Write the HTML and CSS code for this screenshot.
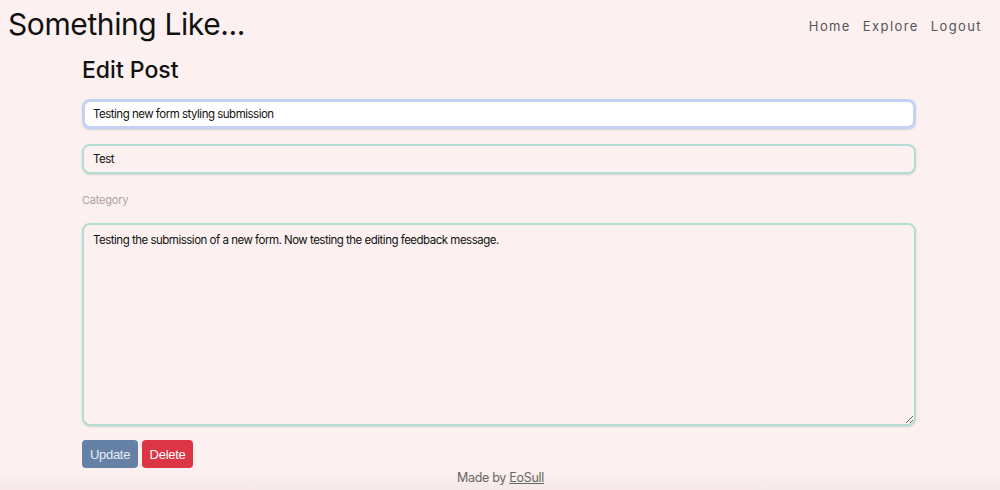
FILE: index.html
```html
<!DOCTYPE html>
<html>
<head>
<meta charset="utf-8">
<link rel="stylesheet" href="styles.css">
</head>
<body>
<header class="topbar">
  <h1 class="brand">Something Like...</h1>
  <nav class="nav">
    <a href="#">Home</a>
    <a href="#">Explore</a>
    <a href="#">Logout</a>
  </nav>
</header>
<main class="content">
  <h2 class="title">Edit Post</h2>
  <form class="form">
    <input class="field field-focus" type="text" value="Testing new form styling submission">
    <input class="field" type="text" value="Test">
    <div class="label">Category</div>
    <textarea class="field area">Testing the submission of a new form. Now testing the editing feedback message.</textarea>
    <div class="buttons">
      <button class="btn btn-update" type="button">Update</button>
      <button class="btn btn-delete" type="button">Delete</button>
    </div>
  </form>
</main>
<footer class="footer">Made by <a href="#">EoSull</a></footer>
</body>
</html>
```
FILE: styles.css
```css
html, body {
  margin: 0;
  padding: 0;
}
body {
  background: #fcf1f0;
  font-family: Inter, "Noto Sans", sans-serif;
  color: #111;
  height: 490px;
  overflow: hidden;
}
.topbar {
  display: flex;
  justify-content: space-between;
  align-items: flex-start;
  padding: 0 18px 0 8px;
}
.brand {
  margin: 6px 0 0;
  font-size: 30px;
  font-weight: 400;
  letter-spacing: -0.4px;
  line-height: 36px;
  color: #111;
}
.nav {
  display: flex;
  gap: 12px;
  margin-top: 18px;
}
.nav a {
  color: #555;
  text-decoration: none;
  font-size: 13px;
  letter-spacing: 1.4px;
}
.content {
  width: 834px;
  margin: 0 auto;
  transform: translateX(-1px);
}
.title {
  margin: 13px 0 0;
  font-size: 23px;
  font-weight: 500;
  line-height: 30px;
}
.form {
  display: flex;
  flex-direction: column;
  margin-top: 14px;
}
.field {
  box-sizing: border-box;
  width: 100%;
  height: 30px;
  border: 2px solid #b3dcd2;
  border-radius: 8px;
  background: transparent;
  font-family: Inter, "Noto Sans", sans-serif;
  font-size: 11.5px;
  letter-spacing: -0.5px;
  color: #111;
  padding: 0 9px;
  outline: none;
  box-shadow: 0 1px 2px rgba(120,160,150,0.35);
}
.field + .field {
  margin-top: 15px;
}
.field-focus {
  background: #fff;
  border: 3px solid #c6d2f5;
  padding: 0 8px;
}
.label {
  font-size: 11px;
  letter-spacing: -0.2px;
  color: #a9a3a3;
  margin-top: 20px;
  line-height: 13px;
}
.area {
  margin-top: 16px;
  height: 203px;
  resize: vertical;
  padding: 7px 9px;
  line-height: 16px;
}
.buttons {
  display: flex;
  gap: 4px;
  margin-top: 14px;
}
.btn {
  height: 28px;
  border: 1px solid transparent;
  border-radius: 4px;
  font-family: "Liberation Sans", Arial, sans-serif;
  font-size: 13px;
  letter-spacing: -0.3px;
  padding: 0 6px;
  color: #fff;
}
.btn-update {
  background: #6582a6;
  color: #e8edf3;
  width: 56px;
}
.btn-delete {
  background: #dc3545;
  width: 51px;
}
.footer {
  text-align: center;
  font-size: 12.5px;
  letter-spacing: -0.3px;
  color: #666;
  margin-top: 2px;
  padding-left: 1px;
  height: 40px;
  background: linear-gradient(to bottom, rgba(240,225,225,0) 0%, rgba(238,222,222,0.9) 100%);
}
.footer a {
  color: #666;
}
```
